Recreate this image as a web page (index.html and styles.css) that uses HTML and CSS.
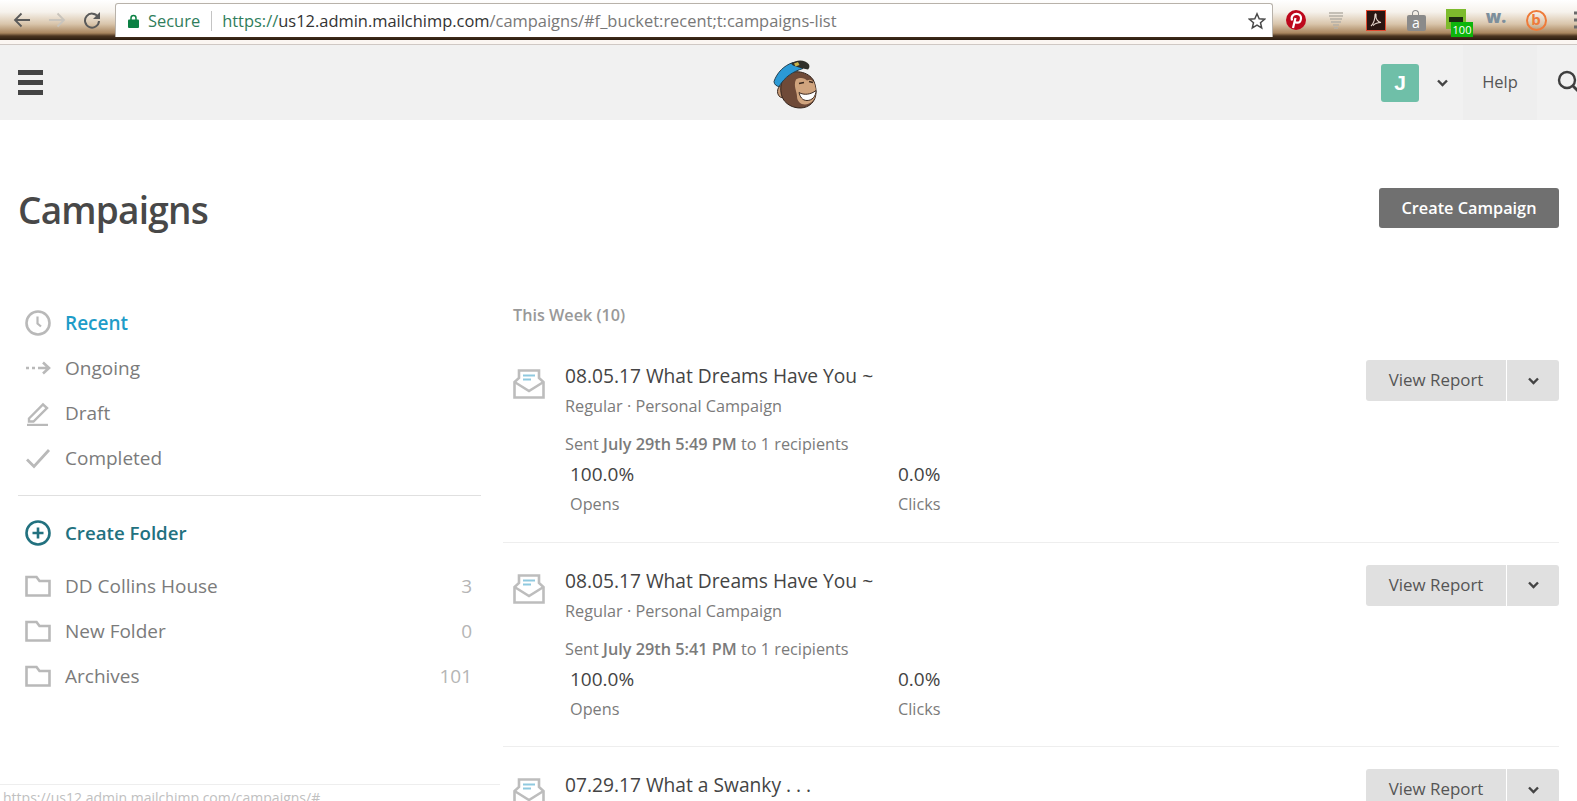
FILE: index.html
```html
<!DOCTYPE html>
<html>
<head>
<meta charset="utf-8">
<title>Campaigns</title>
<link rel="stylesheet" href="styles.css">
</head>
<body>

<div class="toolbar">
  <div class="nav-btns">
    <svg width="18" height="16" viewBox="0 0 18 16"><path d="M17 8H2M8.500 1.500L2 8l6.500 6.500" fill="none" stroke="#5a5a5a" stroke-width="1.800"/></svg>
    <svg width="18" height="16" viewBox="0 0 18 16"><path d="M1 8h15M9.500 1.500L16 8l-6.500 6.500" fill="none" stroke="#c9c4bc" stroke-width="1.800"/></svg>
    <svg width="18" height="18" viewBox="0 0 18 18"><path d="M15 6A7 7 0 1 0 16 10" fill="none" stroke="#5a5a5a" stroke-width="2"/><path d="M17 1v7h-7z" fill="#5a5a5a"/></svg>
  </div>
  <div class="omnibox">
    <svg class="lock" width="11" height="14" viewBox="0 0 11 14"><path d="M3 6V4a2.500 2.500 0 0 1 5 0v2" fill="none" stroke="#0b8043" stroke-width="1.500"/><rect y="5.500" width="11" height="8.500" rx="1" fill="#0b8043"/></svg>
    <span class="secure">Secure</span>
    <span class="omni-sep"></span>
    <span class="url"><span class="url-scheme">https://</span><span class="url-host">us12.admin.mailchimp.com</span>/campaigns/#f_bucket:recent;t:campaigns-list</span>
    <svg class="star" width="18" height="18" viewBox="0 0 18 18"><path d="M9 1.800l2.200 4.900 5.300.5-4 3.500 1.200 5.200L9 13.200l-4.700 2.700 1.200-5.200-4-3.500 5.300-.5z" fill="none" stroke="#4a4a4a" stroke-width="1.500"/></svg>
  </div>
  <div class="extensions">
    <svg width="22" height="22" viewBox="0 0 22 22"><circle cx="11" cy="11" r="10" fill="#bd081c"/><path d="M8 19l2.500-10M7 11.500C5.500 7 9 4.800 11.500 4.800c3 0 4.800 2 4.500 4.700-.3 2.700-2 4.400-4 4.200-1.200-.1-2-1-2-1" fill="none" stroke="#fff" stroke-width="2.200"/></svg>
    <svg width="22" height="22" viewBox="0 0 22 22"><path d="M4 4h14M4 7h14M5 10h12M6 13h10M8 16h6M9 19h4" stroke="#b5b0a6" stroke-width="1.600"/></svg>
    <svg width="20" height="21" viewBox="0 0 20 21"><rect x=".5" y=".5" width="19" height="20" fill="#2a1512" stroke="#e0492f"/><path d="M5 16c3-3 4-8 4-11 0-2 1.500-1 1 1-.5 3 2 6 5 6.500-3 0-6 1-8 3" fill="none" stroke="#e9d8d0" stroke-width="1.100"/></svg>
    <span class="ext-bag">a</span>
    <span class="ext-rt"><span class="ext-rt-mark"></span><span class="ext-badge">100</span></span>
    <span class="ext-w">w.</span>
    <span class="ext-b">b</span>
    <svg width="6" height="20" viewBox="0 0 6 20"><path d="M1 3h4M1 10h4M1 17h4" stroke="#6a6a6a" stroke-width="3"/></svg>
  </div>
</div>
<div class="toolbar-gap"></div>

<header class="topbar">
  <div class="burger"><span></span><span></span><span></span></div>
  <svg class="logo" width="50" height="52" viewBox="30 11.500 50 52">
    <ellipse cx="41" cy="46" rx="4.500" ry="6" fill="#c79a76" stroke="#3a281e"/>
    <path d="M44 30C38 38 38 52 46 58c6 5 16 6 22 2 7-4 9-14 5-24C70 28 55 22 44 30z" fill="#6f4a38" stroke="#33231b"/>
    <path d="M55 34c5-3 9-1 11 1 4-2 7 0 8 5 2 7 1 15-6 18-6 3-12-1-12-7 0-5-4-11-1-17z" fill="#d0a47e"/>
    <path d="M58 47c5 3 12 2 17-2 0 6-4 10-9 10-5 0-7-4-8-8z" fill="#fff" stroke="#3a281e"/>
    <path d="M58 38l5-1M68 36l4 1" stroke="#3a281e" stroke-width="1.500" fill="none"/>
    <path d="M33 36c3-9 10-16 19-19l10 6c-10 3-18 8-24 18-2 0-5-2-5-5z" fill="#2b9ad6" stroke="#24404f"/>
    <path d="M50 18c6-4 14-4 18 1 1 2 0 4-1 5-5-1-10-2-15-4z" fill="#2f2f2a"/>
    <path d="M53 18l4-1.500 1.500 3-4 1.500z" fill="#c9b24a"/>
  </svg>
  <div class="topbar-right">
    <span class="avatar">J</span>
    <svg class="chev" width="11" height="8" viewBox="0 0 11 8"><path d="M1 1.500l4.500 4.500L10 1.500" fill="none" stroke="#444" stroke-width="2.400"/></svg>
    <span class="help">Help</span>
    <svg class="search" width="26" height="26" viewBox="0 0 26 26"><circle cx="10" cy="10" r="8" fill="none" stroke="#3f3f3f" stroke-width="2.400"/><path d="M16 16l8 8" stroke="#3f3f3f" stroke-width="2.800"/></svg>
  </div>
</header>

<div class="title-row">
  <h1>Campaigns</h1>
  <a class="btn-create">Create Campaign</a>
</div>

<div class="columns">
  <aside class="sidebar">
    <ul class="side-list">
      <li class="active">
        <svg width="26" height="26" viewBox="0 0 26 26"><circle cx="13" cy="13" r="11.500" fill="none" stroke="#b9b9b9" stroke-width="2.600"/><path d="M12.500 6.500v7l3.500 3" fill="none" stroke="#b9b9b9" stroke-width="2.200"/></svg>
        Recent
      </li>
      <li>
        <svg width="26" height="26" viewBox="0 0 26 26"><path d="M1 13h3M7 13h3M13 13h11M18 7.500l6 5.500-6 5.500" fill="none" stroke="#b9b9b9" stroke-width="2.600"/></svg>
        Ongoing
      </li>
      <li>
        <svg width="26" height="26" viewBox="0 0 26 26"><path d="M4 18.500L18 4.500l4 3.500L8.500 21.500H4z" fill="none" stroke="#b9b9b9" stroke-width="2.400"/><path d="M2 25h21" stroke="#b9b9b9" stroke-width="2.400"/></svg>
        Draft
      </li>
      <li>
        <svg width="26" height="26" viewBox="0 0 26 26"><path d="M2 14.500l7 7L24 5" fill="none" stroke="#b9b9b9" stroke-width="2.800"/></svg>
        Completed
      </li>
    </ul>
    <div class="create-folder">
      <svg width="26" height="26" viewBox="0 0 26 26"><circle cx="13" cy="13" r="11.500" fill="none" stroke="#22717f" stroke-width="2.600"/><path d="M13 7.500v11M7.500 13h11" stroke="#22717f" stroke-width="2.600"/></svg>
      Create Folder
    </div>
    <ul class="side-list folders">
      <li>
        <svg width="26" height="22" viewBox="0 0 26 22"><path d="M1.500 20.500V2h10l3 4h10v14.500z" fill="none" stroke="#b9b9b9" stroke-width="2.600"/></svg>
        DD Collins House<span class="count">3</span>
      </li>
      <li>
        <svg width="26" height="22" viewBox="0 0 26 22"><path d="M1.500 20.500V2h10l3 4h10v14.500z" fill="none" stroke="#b9b9b9" stroke-width="2.600"/></svg>
        New Folder<span class="count">0</span>
      </li>
      <li>
        <svg width="26" height="22" viewBox="0 0 26 22"><path d="M1.500 20.500V2h10l3 4h10v14.500z" fill="none" stroke="#b9b9b9" stroke-width="2.600"/></svg>
        Archives<span class="count">101</span>
      </li>
    </ul>
  </aside>

  <main class="list">
    <h2>This Week (10)</h2>

    <div class="camp">
      <svg class="camp-icon" width="32" height="30" viewBox="0 0 32 30"><path d="M1.500 13v15.500h29V13L26 9V1.500H6V9z" fill="#fff" stroke="#bdbdbd" stroke-width="2.600"/><path d="M1.500 13L16 22l14.500-9" fill="none" stroke="#bdbdbd" stroke-width="2.600"/><path d="M10 6.500h12M10 10.500h8" stroke="#8fc9df" stroke-width="2"/></svg>
      <div class="camp-body">
        <div class="camp-title">08.05.17 What Dreams Have You ~</div>
        <div class="camp-type">Regular · Personal Campaign</div>
        <div class="camp-sent">Sent <b>July 29th 5:49 PM</b> to 1 recipients</div>
        <div class="stats">
          <div class="stat stat-opens"><div class="stat-num">100.0%</div><div class="stat-label">Opens</div></div>
          <div class="stat"><div class="stat-num">0.0%</div><div class="stat-label">Clicks</div></div>
        </div>
      </div>
      <div class="split">
        <span class="split-main">View Report</span>
        <span class="split-arrow"><svg width="11" height="8" viewBox="0 0 11 8"><path d="M1 1.500l4.500 4.500L10 1.500" fill="none" stroke="#444" stroke-width="2.400"/></svg></span>
      </div>
    </div>

    <div class="camp">
      <svg class="camp-icon" width="32" height="30" viewBox="0 0 32 30"><path d="M1.500 13v15.500h29V13L26 9V1.500H6V9z" fill="#fff" stroke="#bdbdbd" stroke-width="2.600"/><path d="M1.500 13L16 22l14.500-9" fill="none" stroke="#bdbdbd" stroke-width="2.600"/><path d="M10 6.500h12M10 10.500h8" stroke="#8fc9df" stroke-width="2"/></svg>
      <div class="camp-body">
        <div class="camp-title">08.05.17 What Dreams Have You ~</div>
        <div class="camp-type">Regular · Personal Campaign</div>
        <div class="camp-sent">Sent <b>July 29th 5:41 PM</b> to 1 recipients</div>
        <div class="stats">
          <div class="stat stat-opens"><div class="stat-num">100.0%</div><div class="stat-label">Opens</div></div>
          <div class="stat"><div class="stat-num">0.0%</div><div class="stat-label">Clicks</div></div>
        </div>
      </div>
      <div class="split">
        <span class="split-main">View Report</span>
        <span class="split-arrow"><svg width="11" height="8" viewBox="0 0 11 8"><path d="M1 1.500l4.500 4.500L10 1.500" fill="none" stroke="#444" stroke-width="2.400"/></svg></span>
      </div>
    </div>

    <div class="camp">
      <svg class="camp-icon" width="32" height="30" viewBox="0 0 32 30"><path d="M1.500 13v15.500h29V13L26 9V1.500H6V9z" fill="#fff" stroke="#bdbdbd" stroke-width="2.600"/><path d="M1.500 13L16 22l14.500-9" fill="none" stroke="#bdbdbd" stroke-width="2.600"/><path d="M10 6.500h12M10 10.500h8" stroke="#8fc9df" stroke-width="2"/></svg>
      <div class="camp-body">
        <div class="camp-title">07.29.17 What a Swanky . . .</div>
      </div>
      <div class="split">
        <span class="split-main">View Report</span>
        <span class="split-arrow"><svg width="11" height="8" viewBox="0 0 11 8"><path d="M1 1.500l4.500 4.500L10 1.500" fill="none" stroke="#444" stroke-width="2.400"/></svg></span>
      </div>
    </div>
  </main>
</div>

<div class="statusbar">https://us12.admin.mailchimp.com/campaigns/#</div>

</body>
</html>
```

FILE: styles.css
```css
html, body {
    margin: 0;
    height: 801px;
    overflow: hidden;
    background: #fff;
}
body {
    position: relative;
    font-family: "Open Sans", sans-serif;
    color: #444;
}
ul {
    list-style-type: none;
    margin: 0;
    padding: 0;
}

/* browser chrome */
.toolbar {
    height: 37px;
    padding-top: 3px;
    box-sizing: content-box;
    display: flex;
    background: linear-gradient(#ffffff 0, #f6f2ec 12px, #d9c5ab 24px, #a9865f 33px, #4a3420 36px, #2a1c10 40px);
}
.toolbar-gap {
    height: 4px;
    background: #fbf6f2;
    border-bottom: 1px solid #cfc8c4;
}
.nav-btns {
    width: 115px;
    padding-left: 13px;
    box-sizing: border-box;
    display: flex;
    align-items: center;
    gap: 17px;
    height: 34px;
}
.omnibox {
    width: 1158px;
    height: 34px;
    background: #fff;
    border: 1px solid #b8b2aa;
    border-bottom: 0;
    border-radius: 3px 3px 0 0;
    box-sizing: border-box;
    display: flex;
    align-items: center;
    padding: 0 6px 0 12px;
    font-size: 16.450px;
    white-space: nowrap;
}
.lock {
    margin-right: 9px;
}
.secure {
    color: #2f7d5b;
}
.omni-sep {
    width: 1px;
    height: 20px;
    background: #c4c4c4;
    margin: 0 10px 0 11px;
}
.url {
    color: #787878;
    flex: 1;
}
.url-scheme {
    color: #2f7d5b;
}
.url-host {
    color: #333;
}
.extensions {
    flex: 1;
    display: grid;
    grid-template-columns: repeat(8, 40px);
    justify-items: center;
    align-items: center;
    height: 34px;
    padding-left: 3px;
    overflow: hidden;
}
.ext-bag {
    position: relative;
    width: 19px;
    height: 16px;
    margin-top: 5px;
    background: #8a8a8a;
    border-radius: 2px;
    color: #fff;
    font-size: 14px;
    line-height: 16px;
    text-align: center;
}
.ext-bag::before {
    content: "";
    position: absolute;
    left: 5px;
    top: -5px;
    width: 7px;
    height: 5px;
    border: 1.500px solid #8a8a8a;
    border-bottom: 0;
    border-radius: 4px 4px 0 0;
    box-sizing: border-box;
}
.ext-rt {
    position: relative;
    width: 20px;
    height: 20px;
    background: #7dbb2d;
    margin-top: -3px;
}
.ext-rt-mark {
    position: absolute;
    left: 3px;
    top: 8px;
    width: 14px;
    height: 5px;
    background: #1b2a12;
}
.ext-badge {
    position: absolute;
    left: 5px;
    top: 13px;
    width: 22px;
    height: 15px;
    background: #0cb50c;
    color: #fff;
    font-size: 11px;
    line-height: 15px;
    text-align: center;
}
.ext-w {
    color: #7d8f9c;
    font-size: 17px;
    font-weight: 800;
    line-height: 20px;
    margin-top: -6px;
}
.ext-b {
    width: 17px;
    height: 17px;
    border: 2px solid #ee7b3a;
    border-radius: 50%;
    color: #ee7b3a;
    font-size: 15px;
    font-weight: 700;
    line-height: 15px;
    text-align: center;
}

/* app header */
.topbar {
    height: 75px;
    background: #f1f1f1;
    display: flex;
    align-items: center;
    overflow: hidden;
}
.burger {
    width: 25px;
    margin-left: 18px;
}
.burger span {
    display: block;
    height: 5px;
    background: #444;
    margin-bottom: 5px;
}
.burger span:last-child {
    margin-bottom: 0;
}
.logo {
    margin-left: 728px;
}
.topbar-right {
    margin-left: auto;
    display: flex;
    align-items: center;
    height: 100%;
    width: 196px;
    flex: none;
}
.avatar {
    width: 38px;
    height: 38px;
    flex: none;
    border-radius: 3px;
    background: #6fbfa8;
    color: #fff;
    font-family: "Liberation Sans", sans-serif;
    font-size: 21px;
    font-weight: 700;
    line-height: 38px;
    text-align: center;
}
.chev {
    flex: none;
    margin-left: 18px;
    margin-right: 15px;
}
.help {
    width: 74px;
    height: 100%;
    background: #eeeeee;
    color: #555;
    font-size: 16.500px;
    line-height: 73px;
    text-align: center;
    flex: none;
}
.search {
    margin-left: 20px;
    flex: none;
}

/* page title */
.title-row {
    display: flex;
    align-items: center;
    justify-content: space-between;
    margin-top: 68px;
    padding: 0 18px;
    height: 40px;
}
h1 {
    margin: 3px 0 0;
    font-size: 37px;
    font-weight: 600;
    letter-spacing: -.8px;
    color: #484848;
}
.btn-create {
    width: 180px;
    height: 40px;
    border-radius: 3px;
    background: #707070;
    color: #fff;
    font-size: 16.300px;
    font-weight: 600;
    line-height: 40px;
    text-align: center;
}

/* columns */
.columns {
    display: flex;
    margin-top: 72px;
    padding: 0 18px;
}
.sidebar {
    width: 463px;
    flex: none;
}
.side-list li {
    height: 45px;
    display: flex;
    align-items: center;
    padding-left: 7px;
    font-size: 19px;
    color: #7b7b7b;
}
.side-list svg {
    width: 26px;
    margin-right: 14px;
    flex: none;
}
.side-list .active {
    color: #1e9cc8;
    font-weight: 600;
}
.count {
    margin-left: auto;
    margin-right: 9px;
    color: #b5b5b5;
}
.create-folder {
    margin-top: 15px;
    border-top: 1px solid #e0e0e0;
    height: 73px;
    display: flex;
    align-items: center;
    padding-left: 7px;
    color: #22717f;
    font-size: 18.700px;
    font-weight: 600;
}
.create-folder svg {
    margin-right: 14px;
}
.folders {
    margin-top: -6px;
}

/* campaign list */
.list {
    margin-left: 22px;
    flex: 1;
}
h2 {
    margin: 3px 0 0 10px;
    height: 35px;
    line-height: 24px;
    font-size: 16.200px;
    font-weight: 600;
    color: #999;
}
.camp {
    display: flex;
    height: 204.500px;
    box-sizing: border-box;
    padding-top: 22px;
    border-bottom: 1px solid #eeeeee;
}
.camp-icon {
    margin: 9px 0 0 10px;
    flex: none;
}
.camp-body {
    margin-left: 20px;
    flex: 1;
}
.camp-title {
    font-size: 19.200px;
    line-height: 30px;
    color: #444;
    margin-top: 1px;
}
.camp-type {
    font-size: 16.250px;
    line-height: 30px;
    color: #7b7b7b;
}
.camp-sent {
    font-size: 16.250px;
    line-height: 24px;
    margin-top: 11px;
    color: #7b7b7b;
}
.camp-sent b {
    font-weight: 600;
}
.stats {
    display: flex;
    margin-top: 3px;
}
.stat {
    width: 328px;
}
.stat-opens {
    padding-left: 5px;
    margin-right: 0;
}
.stat-num {
    font-size: 19px;
    line-height: 30px;
    color: #444;
}
.stat-label {
    font-size: 16.250px;
    line-height: 30px;
    color: #7b7b7b;
}
.split {
    display: flex;
    height: 41px;
    flex: none;
    font-size: 16.900px;
    color: #555;
}
.split-main {
    width: 140px;
    background: #e0e0e0;
    border-radius: 3px 0 0 3px;
    line-height: 39px;
    text-align: center;
}
.split-arrow {
    width: 52px;
    margin-left: 1px;
    background: #e0e0e0;
    border-radius: 0 3px 3px 0;
    display: flex;
    align-items: center;
    justify-content: center;
}

/* link hover bubble, sits over the page */
.statusbar {
    position: absolute;
    left: 0;
    bottom: 0;
    width: 500px;
    height: 17px;
    box-sizing: border-box;
    padding: 4px 0 0 3px;
    background: #fff;
    border-top: 1px solid #eeeeee;
    color: #c0c0c0;
    font-size: 14px;
    line-height: 18px;
    overflow: hidden;
}
```
